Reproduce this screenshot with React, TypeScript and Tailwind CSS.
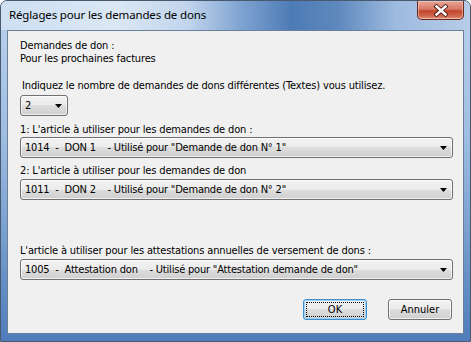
import React from "react";

const uiFont = { fontFamily: '"DejaVu Sans Condensed", Tahoma, "Liberation Sans", sans-serif' };

function Combo({ value, className = "" }: { value: string; className?: string }) {
  return (
    <div
      className={`relative flex h-[21px] items-center rounded-[3px] border border-[#707070] bg-[linear-gradient(180deg,#f2f2f2_0%,#ebebeb_50%,#dddddd_50%,#cfcfcf_100%)] pl-[4px] shadow-[inset_0_0_0_1px_rgba(255,255,255,0.7)] ${className}`}
    >
      <span className="whitespace-pre text-[11px] leading-[13px] tracking-[-0.2px] text-black">{value}</span>
      <svg
        className="absolute right-[5px] top-[8px]"
        width="7"
        height="4"
        viewBox="0 0 7 4"
      >
        <path d="M0 0h7L3.5 4z" fill="#000" />
      </svg>
    </div>
  );
}

function Label({ children, className = "" }: { children: React.ReactNode; className?: string }) {
  return (
    <div className={`h-[13px] text-[11px] leading-[13px] tracking-[-0.15px] text-black ${className}`}>
      {children}
    </div>
  );
}

export default function App() {
  return (
    <div
      className="relative flex h-[342px] w-[471px] flex-col overflow-hidden rounded-t-[7px] border border-[#4a5a6e] bg-[linear-gradient(180deg,#bcd2ec_0%,#9fbde2_40%,#6f98ca_75%,#4f7dbb_100%)]"
      style={uiFont}
    >
      {/* Title bar */}
      <div className="flex h-[29px] items-start bg-[linear-gradient(90deg,#cddff2_0%,#dbe7f4_25%,#c0d4ec_40%,#7aa0cf_52%,#4d7bb5_62%,#5f89be_72%,#9dbadf_84%,#b7cce7_100%)]">
        <div
          className="ml-[8px] mt-[6px] text-[11.5px] leading-[16px] tracking-[-0.15px] text-black"
          style={{ fontFamily: '"Noto Sans", "Open Sans", sans-serif' }}
        >
          Réglages pour les demandes de dons
        </div>
        <div className="ml-auto mr-[6px] flex h-[19px] w-[47px] items-center justify-center rounded-b-[5px] border border-t-0 border-[#6b2a20] bg-[linear-gradient(180deg,#e9a596_0%,#d77a66_45%,#c2452c_55%,#cf6a51_85%,#e09a83_100%)] shadow-[inset_0_0_0_1px_rgba(255,220,210,0.5)]">
          <svg width="16" height="13" viewBox="0 0 16 13">
            <path d="M3.5 2.5l9 8M12.5 2.5l-9 8" stroke="#4a1a14" strokeWidth="4.2" strokeLinecap="square" />
            <path d="M3.5 2.5l9 8M12.5 2.5l-9 8" stroke="#ffffff" strokeWidth="2.4" strokeLinecap="square" />
          </svg>
        </div>
      </div>

      {/* Client area */}
      <div className="mx-[6px] mb-[7px] flex flex-1 flex-col border border-[#6a7f99] bg-[#f0f0f0]">
        <div className="mt-[8px] pl-[12px]">
          <Label>Demandes de don :</Label>
          <Label>Pour les prochaines factures</Label>
        </div>

        <Label className="mt-[14px] pl-[14px]">
          Indiquez le nombre de demandes de dons différentes (Textes) vous utilisez.
        </Label>
        <div className="mt-[3px] pl-[12px]">
          <Combo value="2" className="w-[48px]" />
        </div>

        <div className="flex flex-col pl-[12px] pr-[10px]">
          <Label className="mt-[7px]">1: L'article à utiliser pour les demandes de don :</Label>
          <Combo className="mt-[1px]" value={'1014  -  DON 1    - Utilisé pour "Demande de don N° 1"'} />
          <Label className="mt-[6px]">2: L'article à utiliser pour les demandes de don</Label>
          <Combo className="mt-[2px]" value={'1011  -  DON 2    - Utilisé pour "Demande de don N° 2"'} />
          <Label className="mt-[44px]">
            L'article à utiliser pour les attestations annuelles de versement de dons :
          </Label>
          <Combo
            className="mt-[2px]"
            value={'1005  -  Attestation don    - Utilisé pour "Attestation demande de don"'}
          />
        </div>

        <div className="mt-[19px] flex justify-end gap-[21px] pr-[11px]">
          <button className="flex h-[21px] w-[64px] items-center justify-center rounded-[3px] border border-[#3c8fd0] bg-[linear-gradient(180deg,#f2f2f2_0%,#ebebeb_50%,#dddddd_50%,#cfcfcf_100%)] p-[2px] shadow-[inset_0_0_0_1px_#9fd3f5]">
            <span className="flex h-full w-full items-center justify-center border border-dotted border-black text-[11px] leading-[13px] text-black">
              OK
            </span>
          </button>
          <button className="flex h-[21px] w-[64px] items-center justify-center rounded-[3px] border border-[#707070] bg-[linear-gradient(180deg,#f2f2f2_0%,#ebebeb_50%,#dddddd_50%,#cfcfcf_100%)] text-[11px] leading-[13px] text-black shadow-[inset_0_0_0_1px_rgba(255,255,255,0.7)]">
            Annuler
          </button>
        </div>
      </div>
    </div>
  );
}
